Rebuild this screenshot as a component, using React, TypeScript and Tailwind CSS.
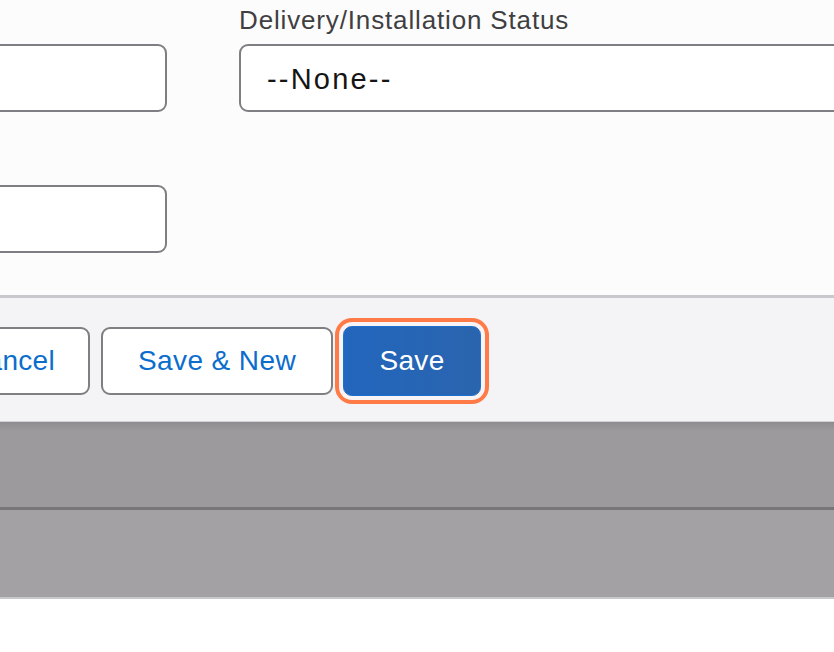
export default function App() {
  return (
    <div
      className="w-[834px] h-[652px] overflow-hidden bg-white flex flex-col"
      style={{ fontFamily: '"Liberation Sans", Arial, sans-serif' }}
    >
      {/* form body */}
      <div className="h-[295px] bg-[#fdfcfd] flex gap-[72px] ml-[-60px] shrink-0">
        <div className="w-[227px] shrink-0 flex flex-col pt-[44px] gap-[73px]">
          <div className="h-[68px] rounded-[9px] border-2 border-[#7f7e83] bg-white" />
          <div className="h-[68px] rounded-[9px] border-2 border-[#7f7e83] bg-white" />
        </div>
        <div className="flex-1 min-w-0 flex flex-col">
          <div className="h-[44px] pt-[5px] text-[26px] leading-[30px] tracking-[0.85px] text-[#3f3f42] whitespace-nowrap">
            Delivery/Installation Status
          </div>
          <div className="h-[68px] w-[640px] rounded-[9px] border-2 border-[#7f7e83] bg-white flex items-center pt-[3px] pl-[26px] text-[29px] tracking-[2.2px] text-[#151515]">
            --None--
          </div>
        </div>
      </div>

      {/* footer with actions */}
      <div className="h-[127px] shrink-0 border-t-[3px] border-[#c9c8cc] bg-[#f4f3f6] border-b border-b-[#d2d1d4] flex items-start pt-[29px] gap-[11px] ml-[-69px]">
        <button className="h-[68px] w-[159px] rounded-[9px] border-2 border-[#7f7e83] bg-white text-[28px] tracking-[0.3px] text-[#0b6dcc]">
          Cancel
        </button>
        <button className="h-[68px] w-[232px] rounded-[9px] border-2 border-[#7f7e83] bg-white text-[28px] tracking-[0.4px] text-[#0b6dcc]">
          Save &amp; New
        </button>
        <button className="ml-[-1px] mt-[-1px] h-[70px] w-[138px] rounded-[9px] border border-[#1c70cf] bg-gradient-to-r from-[#2266bd] to-[#2a64ae] text-[28px] tracking-[0.3px] text-white shadow-[0_0_0_4px_#f8f3f4,0_0_0_8px_#ff7a47]">
          Save
        </button>
      </div>

      {/* dimmed panels below the modal */}
      <div className="h-[85px] shrink-0 bg-gradient-to-b from-[#8e8c90] via-[#9c9a9d] via-[10%] to-[#9c9a9d]" />
      <div className="h-[3px] shrink-0 bg-[#77757a]" />
      <div className="h-[87px] shrink-0 bg-[#a3a1a4]" />
      <div className="h-[2px] shrink-0 bg-[#c8c7ca]" />
      <div className="flex-1 bg-white" />
    </div>
  )
}
